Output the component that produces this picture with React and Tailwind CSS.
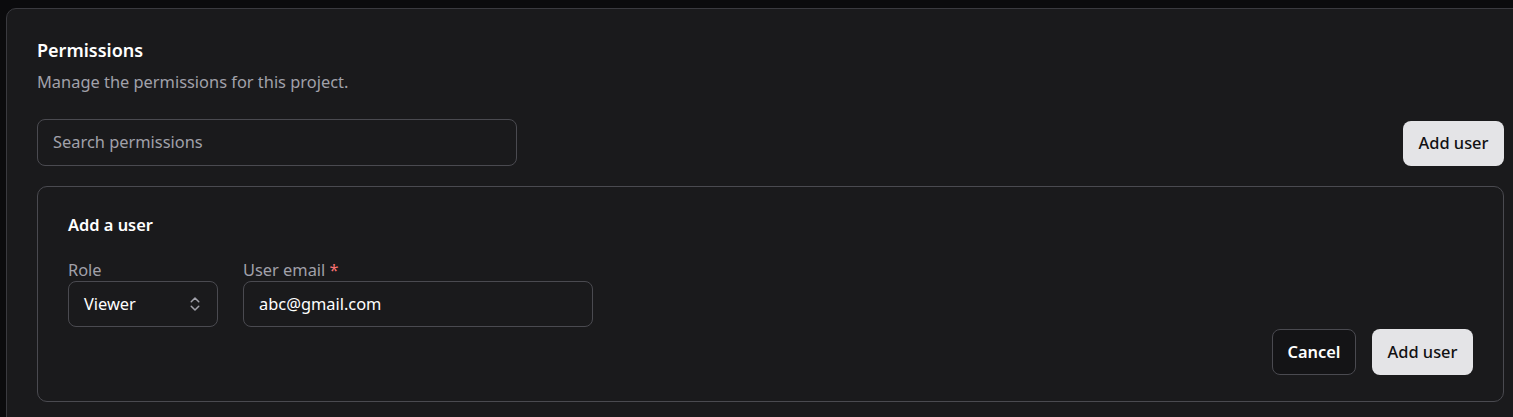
import React from "react";
import { ChevronsUpDown } from "lucide-react";

export default function App() {
  return (
    <div
      className="h-[417px] w-[1513px] overflow-hidden bg-[#0b0b0d] pl-[6px] pt-[8px]"
      style={{ fontFamily: '"Noto Sans", "Open Sans", Arial, sans-serif' }}
    >
      <div className="h-[440px] w-[1529px] rounded-[10px] border border-[#3a3a3f] bg-[#1a1a1c] pl-[30px] pr-[30px] pt-[27px]">
        <h2 className="text-[18px] font-semibold leading-[28px] text-white">Permissions</h2>
        <p className="text-[16.4px] leading-[24px] text-[#a1a1aa] mt-[6px]">
          Manage the permissions for this project.
        </p>
        <div className="mt-[25px] flex items-end justify-between">
          <div className="flex h-[47px] w-[480px] items-center rounded-[8px] border border-[#4a4a50] px-[15px] text-[16.4px] text-[#a1a1aa]">
            Search permissions
          </div>
          <button className="h-[45px] w-[101px] rounded-[8px] bg-[#e4e4e7] text-[16.4px] font-medium text-[#111113]">
            Add user
          </button>
        </div>
        <div className="mt-[20px] rounded-[10px] border border-[#4a4a50] px-[30px] pt-[26px] pb-[26px]">
          <h3 className="text-[16.4px] font-semibold leading-[24px] text-white">Add a user</h3>
          <div className="mt-[22px] flex gap-[25px]">
            <div className="flex flex-col">
              <label className="text-[16.4px] leading-[22px] text-[#a1a1aa]">Role</label>
              <div className="flex h-[46px] w-[150px] items-center justify-between rounded-[8px] border border-[#4a4a50] pl-[15px] pr-[13px] text-[16.4px] text-white">
                <span>Viewer</span>
                <ChevronsUpDown size={18} strokeWidth={2} className="text-[#a1a1aa]" />
              </div>
            </div>
            <div className="flex flex-col">
              <label className="text-[16.4px] leading-[22px] text-[#a1a1aa]">
                User email <span className="text-[#f87171]">*</span>
              </label>
              <div className="flex h-[46px] w-[350px] items-center rounded-[8px] border border-[#4a4a50] px-[15px] text-[16.4px] text-white">
                abc@gmail.com
              </div>
            </div>
          </div>
          <div className="mt-[2px] flex justify-end gap-[16px]">
            <button className="h-[46px] w-[84px] rounded-[8px] border border-[#4a4a50] bg-[#141416] text-[16.4px] font-semibold text-white">
              Cancel
            </button>
            <button className="h-[46px] w-[101px] rounded-[8px] bg-[#e4e4e7] text-[16.4px] font-medium text-[#111113]">
              Add user
            </button>
          </div>
        </div>
      </div>
    </div>
  );
}
